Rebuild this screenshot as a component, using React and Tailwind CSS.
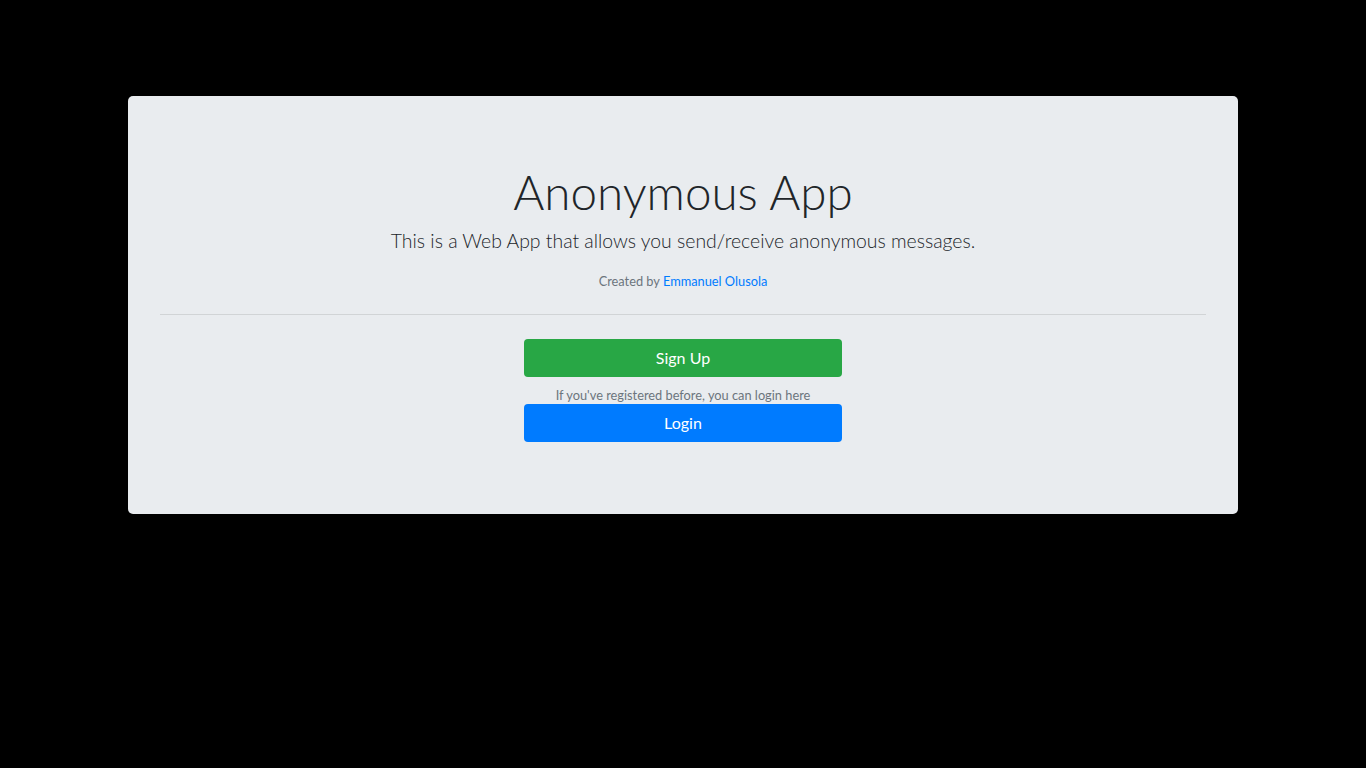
export default function App() {
  return (
    <div className="min-h-screen bg-black pt-[96px] font-['Lato','Open_Sans',sans-serif] text-[#212529]">
      <div className="mx-auto w-[1110px]">
        <div className="rounded-[5px] bg-[#e9ecef] px-8 pt-16 pb-16">
          <div className="text-center">
            <h1 className="text-[47.6px] leading-[64px] font-light">Anonymous App</h1>
            <p className="mt-[2px] text-[19.4px] leading-[30px] font-light">
              This is a Web App that allows you send/receive anonymous messages.
            </p>
            <p className="mt-4 text-[12.8px] leading-[19px] text-[#6c757d]">
              Created by <a href="#" className="text-[#007bff]">Emmanuel Olusola</a>
            </p>
          </div>

          <hr className="mt-[23px] mb-6 border-t border-black/10" />

          <div className="mx-auto flex w-[318px] flex-col pb-2">
            <button className="h-[38px] rounded-[4px] bg-[#28a745] text-[16px] text-white">
              Sign Up
            </button>
            <small className="mt-[9px] text-center text-[12.8px] leading-[18px] text-[#6c757d]">
              If you've registered before, you can login here
            </small>
            <button className="h-[38px] rounded-[4px] bg-[#007bff] text-[16px] text-white">
              Login
            </button>
          </div>
        </div>
      </div>
    </div>
  );
}
